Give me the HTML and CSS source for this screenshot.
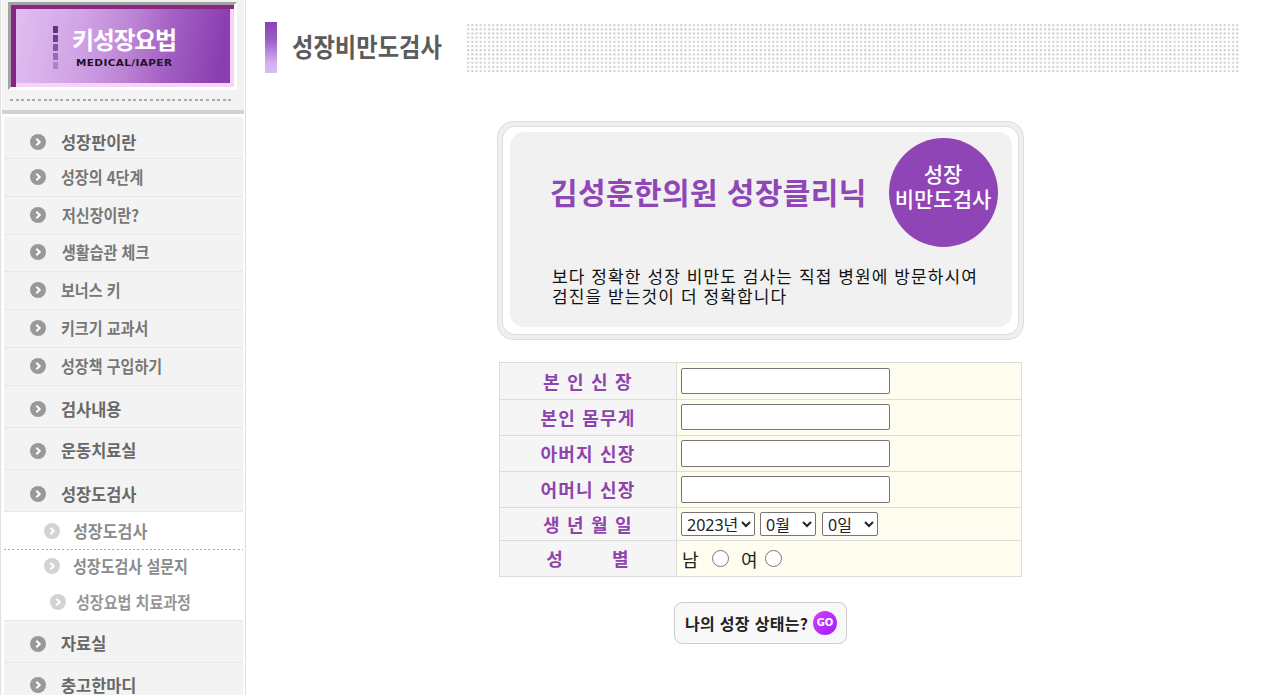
FILE: index.html
```html
<!DOCTYPE html>
<html lang="ko">
<head>
    <meta charset="utf-8">
    <title>성장비만도검사</title>
    <link rel="stylesheet" href="styles.css">
</head>
<body>
    <svg width="0" height="0" class="defs">
        <symbol id="arrow" viewBox="0 0 16 16">
            <circle cx="8" cy="8" r="8" fill="currentColor"/>
            <path d="M6.3 4.8L9.7 8L6.3 11.2" fill="none" stroke="#fff" stroke-width="2"/>
        </symbol>
    </svg>
    <div class="page">
        <div class="sidebar">
            <div class="side-top">
                <div class="logo">
                    <div class="logo-bars"><i></i><i></i><i></i><i></i><i></i></div>
                    <div class="logo-text">
                        <strong>키성장요법</strong>
                        <span>MEDICAL/IAPER</span>
                    </div>
                </div>
                <div class="dash"></div>
            </div>
            <ul class="menu">
                <li class="first"><svg><use href="#arrow"/></svg><a>성장판이란</a></li>
                <li class="small m2"><svg><use href="#arrow"/></svg><a>성장의 4단계</a></li>
                <li class="small m3"><svg><use href="#arrow"/></svg><a>저신장이란?</a></li>
                <li class="small m4"><svg><use href="#arrow"/></svg><a>생활습관 체크</a></li>
                <li class="small m5"><svg><use href="#arrow"/></svg><a>보너스 키</a></li>
                <li class="small m6"><svg><use href="#arrow"/></svg><a>키크기 교과서</a></li>
                <li class="small m7"><svg><use href="#arrow"/></svg><a>성장책 구입하기</a></li>
                <li><svg><use href="#arrow"/></svg><a>검사내용</a></li>
                <li class="m9"><svg><use href="#arrow"/></svg><a>운동치료실</a></li>
                <li class="m10"><svg><use href="#arrow"/></svg><a>성장도검사</a></li>
                <li class="sub s1"><svg><use href="#arrow"/></svg><a>성장도검사</a></li>
                <li class="sub s2"><svg><use href="#arrow"/></svg><a>성장도검사 설문지</a></li>
                <li class="sub s3"><svg><use href="#arrow"/></svg><a>성장요법 치료과정</a></li>
                <li class="m9"><svg><use href="#arrow"/></svg><a>자료실</a></li>
                <li class="last"><svg><use href="#arrow"/></svg><a>충고한마디</a></li>
            </ul>
        </div>

        <div class="content">
            <div class="title">
                <div class="title-bar"></div>
                <h1><span>성장비만도검사</span></h1>
                <svg class="dots">
                    <defs>
                        <pattern id="dot" width="4.18" height="4.18" patternUnits="userSpaceOnUse">
                            <rect x="0.2" y="0.2" width="1.9" height="1.9" fill="#c6c6c6"/>
                        </pattern>
                    </defs>
                    <rect width="772" height="48" fill="url(#dot)"/>
                </svg>
            </div>

            <div class="banner">
                <div class="banner-line">
                    <div class="banner-in">
                        <div class="banner-text">
                            <h2>김성훈한의원 성장클리닉</h2>
                            <p>보다 정확한 성장 비만도 검사는 직접 병원에 방문하시여<br>검진을 받는것이 더 정확합니다</p>
                        </div>
                        <div class="circle"><span>성장</span><span>비만도검사</span></div>
                    </div>
                </div>
            </div>

            <form>
                <table>
                    <tr class="r1"><th>본 인 신 장</th><td><input type="text"></td></tr>
                    <tr><th>본인 몸무게</th><td><input type="text"></td></tr>
                    <tr><th>아버지 신장</th><td><input type="text" class="tall"></td></tr>
                    <tr><th>어머니 신장</th><td><input type="text" class="tall"></td></tr>
                    <tr class="birth">
                        <th>생 년 월 일</th>
                        <td>
                            <div class="cell">
                                <select class="year"><option>2023년</option></select>
                                <select><option>0월</option></select>
                                <select class="day"><option>0일</option></select>
                            </div>
                        </td>
                    </tr>
                    <tr>
                        <th class="sex">성<span></span>별</th>
                        <td>
                            <div class="cell radios">
                                <label>남</label><input type="radio" name="sex">
                                <label class="girl">여</label><input type="radio" name="sex">
                            </div>
                        </td>
                    </tr>
                </table>
                <button type="button"><span>나의 성장 상태는?</span><b>GO</b></button>
            </form>
        </div>
    </div>
</body>
</html>
```
FILE: styles.css
```css
* {
    box-sizing: border-box;
}
body {
    margin: 0;
    background: #fff;
    font-family: "Noto Sans", "Noto Sans CJK KR", sans-serif;
    color: #222;
}
.defs {
    display: block;
}
.page {
    display: flex;
    height: 695px;
    overflow: hidden;
}

/* sidebar */
.sidebar {
    width: 246px;
    height: 695px;
    flex: none;
    border-left: 1px solid #e0e0e0;
    border-right: 1px solid #e0e0e0;
    padding: 0 1px;
    overflow: hidden;
    font-family: "Noto Sans CJK KR", sans-serif;
}
.side-top {
    height: 114px;
    padding: 2px 7px 0 6px;
    background: #f3f3f3;
    border-bottom: 4px solid #d2d2d2;
}
.logo {
    display: flex;
    width: 229px;
    height: 88px;
    border: 3px solid;
    border-color: #a3a3a3 #fff #fff #a3a3a3;
    background: linear-gradient(100deg, #e2c0f2 0%, #d2a5e6 30%, #bd85d6 52%, #a25fc2 70%, #8b3eb1 92%);
    box-shadow: inset 5px 4px #8a2583, inset -4px -4px #f9d3f7;
}
.logo-bars {
    display: flex;
    flex-direction: column;
    gap: 2px;
    padding: 21px 0 0 42px;
}
.logo-bars i {
    width: 5px;
    height: 7px;
    background: #653282;
}
.logo-bars i:nth-child(2) { background: #6f3d8c; }
.logo-bars i:nth-child(3) { background: #87549f; }
.logo-bars i:nth-child(4) { background: #9c67b7; }
.logo-bars i:nth-child(5) { background: #b57fd0; }
.logo-text {
    display: flex;
    flex-direction: column;
    align-items: flex-start;
    padding: 20px 0 0 14px;
}
.logo-text strong {
    color: #fff;
    font-size: 24px;
    line-height: 28px;
    letter-spacing: -1.3px;
    white-space: nowrap;
}
.logo-text span {
    margin: 4px 0 0 4px;
    font: bold 9px/12px "DejaVu Sans", sans-serif;
    letter-spacing: 0.35px;
    color: #221228;
    transform: scaleX(1.16);
    transform-origin: 0 0;
}
.dash {
    width: 223px;
    height: 2px;
    margin: 9px 0 0 2px;
    background: repeating-linear-gradient(90deg, #aaa 0 3px, transparent 3px 5.6px);
}
.menu {
    list-style: none;
    margin: 3px 1px 0 2px;
    padding: 0;
}
.menu li {
    display: flex;
    align-items: flex-start;
    height: 42px;
    padding: 15px 0 0 26px;
    background: #f3f3f3;
    border-bottom: 1px solid #e8e8e8;
    color: #686868;
    font-size: 17px;
    font-weight: bold;
    line-height: 15px;
    white-space: nowrap;
}
.menu a {
    transform: scaleX(0.965);
    transform-origin: 0 0;
}
.menu svg {
    width: 16px;
    height: 16px;
    flex: none;
    margin-right: 15px;
    color: #999;
}
.menu .first { padding-top: 16.5px; }
.menu .small {
    height: 38px;
    padding-top: 9.5px;
    color: #777;
}
.menu .small a {
    transform: scaleX(0.885);
}
.menu .m4 {
    height: 37px;
    padding-top: 9px;
}
.menu .m3 a, .menu .m4 a { margin-left: 1px; }
.menu .m9 a { margin-top: -1px; }
.menu .m10 { padding-top: 16px; }
.menu .sub {
    height: 38px;
    padding: 11px 0 0 40px;
    background: #fff;
    border-bottom: 0;
    color: #8b8b8b;
}
.menu .sub svg {
    margin-right: 13px;
    color: #d3d3d3;
}
.menu .s1 {
    background: repeating-linear-gradient(90deg, #a8a8a8 0 2px, #fff 2px 4.17px) 0 100% / 100% 1px no-repeat #fff;
}
.menu .s1 a {
    transform: scaleX(0.95);
}
.menu .s2 {
    height: 36px;
    padding-top: 8px;
}
.menu .s2 a, .menu .s3 a {
    transform: scaleX(0.885);
}
.menu .s3 {
    height: 35px;
    padding: 8px 0 0 46px;
    border-bottom: 1px solid #e8e8e8;
    color: #969696;
}
.menu .s3 svg { margin-right: 10px; }
.menu .last { padding-top: 14px; }

/* content */
.content {
    flex: 1;
}
.title {
    display: flex;
    align-items: flex-start;
    padding: 22px 0 0 19px;
}
.title-bar {
    width: 12px;
    height: 51px;
    background: linear-gradient(#8446b5, #9b5dc8 35%, #d3aff0 80%, #dbbcf4);
}
.title h1 {
    width: 175px;
    margin: 9px 0 0 15px;
    font: bold 26px/30px "Noto Sans CJK KR", sans-serif;
    color: #5c5c5c;
    white-space: nowrap;
}
.title h1 span {
    display: inline-block;
    transform: scaleX(0.895);
    transform-origin: 0 0;
}
.dots {
    width: 772px;
    height: 48px;
    margin-top: 2px;
}
.banner {
    width: 527px;
    height: 219px;
    margin: 48px 0 0 251px;
    padding: 4px;
    background: #efefef;
    border: 1px solid #dedede;
    border-radius: 16px;
}
.banner-line {
    height: 100%;
    padding: 5px 6px 7px 7px;
    background: #fff;
    border: 1px solid #dedede;
    border-radius: 13px;
}
.banner-in {
    display: flex;
    height: 100%;
    padding: 6px 0 0 41px;
    background: #f1f1f1;
    border-radius: 14px;
}
.banner-text {
    width: 337.5px;
    white-space: nowrap;
}
.banner h2 {
    margin: 35px 0 0 -1px;
    font: bold 30px/36px "Noto Sans CJK KR", sans-serif;
    letter-spacing: 0.4px;
    color: #9046b6;
}
.banner p {
    margin: 57px 0 0 1px;
    font: 17px/19.5px "Noto Sans CJK KR", sans-serif;
    letter-spacing: 1.1px;
    color: #111;
}
.circle {
    display: flex;
    flex-direction: column;
    align-items: center;
    width: 109px;
    height: 109px;
    padding-top: 23px;
    border-radius: 50%;
    background: #8f45b5;
    color: #fff;
    font: 500 21px/25px "Noto Sans CJK KR", sans-serif;
    white-space: nowrap;
}

/* form */
form {
    width: 523px;
    margin: 22px 0 0 253px;
}
table {
    width: 523px;
    border-collapse: collapse;
    table-layout: fixed;
}
tr {
    height: 36px;
}
.r1 {
    height: 37px;
}
.birth {
    height: 33px;
}
th, td {
    padding: 0;
    border: 1px solid #dcdcdc;
}
th {
    width: 177px;
    padding-bottom: 1px;
    background: #f5f5f5;
    color: #8e44ad;
    font: bold 18px/20px "Noto Sans CJK KR", sans-serif;
    letter-spacing: 1.2px;
}
.sex span {
    display: inline-block;
    width: 48px;
}
td {
    padding-left: 4px;
    background: #fffdf0;
    line-height: 0;
}
input[type="text"] {
    width: 209px;
    height: 26px;
    margin: 0 0 1px;
    border: 1px solid #767676;
    border-radius: 2px;
}
input.tall {
    height: 27px;
    margin: 0;
}
.cell {
    display: flex;
    align-items: center;
    gap: 5px;
    line-height: 20px;
}
select {
    width: 56px;
    height: 24px;
    padding: 0 0 0 1px;
    border: 1px solid #767676;
    border-radius: 2px;
    background: #fff;
    color: #222;
    font: 16px "Noto Sans", "Noto Sans CJK KR", sans-serif;
}
.year {
    width: 74px;
}
.day {
    margin-left: 1px;
}
.radios {
    gap: 0;
    font-size: 18px;
}
.radios label {
    width: 31px;
    padding: 2px 0 0 1px;
}
.radios .girl {
    width: 24px;
    margin-left: 12px;
    padding-left: 0;
}
input[type="radio"] {
    width: 17px;
    height: 17px;
    margin: 0;
}
button {
    display: flex;
    align-items: center;
    justify-content: space-between;
    width: 173px;
    height: 42px;
    margin: 25px 0 0 175px;
    padding: 0 9px 0 10px;
    background: #f8f8f8;
    border: 1px solid #ccc;
    border-radius: 8px;
    font: bold 16px "Noto Sans CJK KR", sans-serif;
    color: #222;
    letter-spacing: 0.3px;
    white-space: nowrap;
}
button b {
    width: 24px;
    height: 24px;
    border-radius: 50%;
    background: linear-gradient(135deg, #d63cff, #9d1ffb);
    color: #fff;
    font: bold 10px/24px "DejaVu Sans", sans-serif;
    letter-spacing: 0;
    text-align: center;
}
```
